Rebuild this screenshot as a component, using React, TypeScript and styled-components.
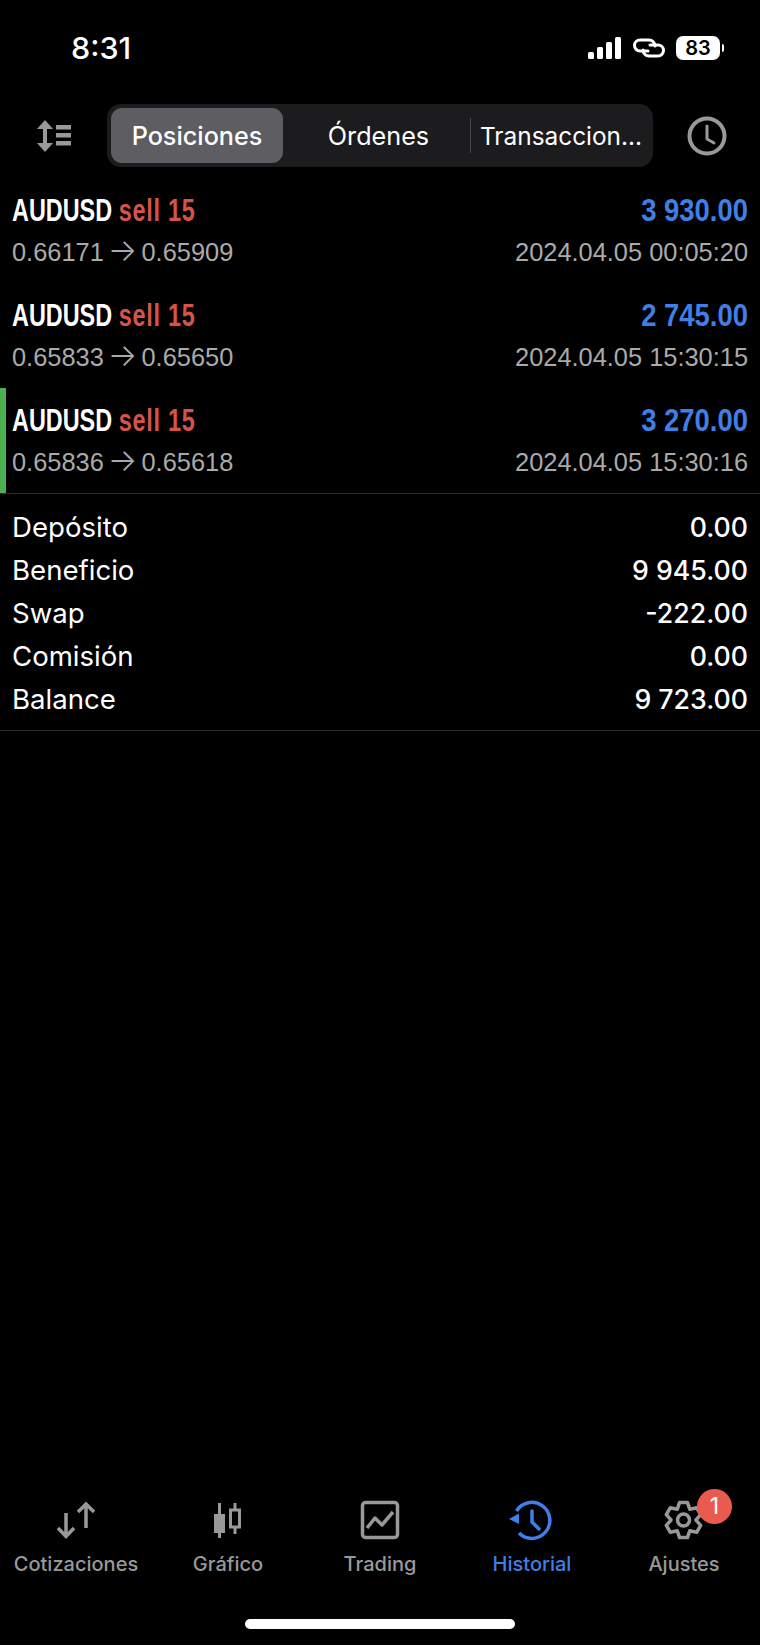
import React from 'react';
import styled, { createGlobalStyle } from 'styled-components';

const GlobalStyle = createGlobalStyle`
  html, body {
    margin: 0;
    padding: 0;
    background: #000;
  }
`;

const Page = styled.div`
  width: 760px;
  height: 1645px;
  display: flex;
  flex-direction: column;
  background: #000;
  color: #fff;
  font-family: Inter, "Liberation Sans", sans-serif;
  overflow: hidden;
`;

const StatusBar = styled.div`
  height: 104px;
  box-sizing: border-box;
  padding: 36px 36px 0 71px;
  display: flex;
  align-items: flex-start;
  justify-content: space-between;
`;

const Clock = styled.div`
  font-size: 30.5px;
  line-height: 24px;
  font-weight: 500;
`;

const StatusIcons = styled.div`
  display: flex;
  align-items: center;
  height: 24px;
`;

const Battery = styled.div`
  width: 44px;
  height: 24px;
  margin-left: 10px;
  border-radius: 7px;
  background: #fff;
  color: #000;
  font-size: 20px;
  font-weight: 600;
  line-height: 24px;
  text-align: center;
`;

const BatteryTip = styled.div`
  width: 2px;
  height: 8px;
  margin-left: 2px;
  border-radius: 0 2px 2px 0;
  background: #fff;
`;

const Toolbar = styled.div`
  height: 63px;
  padding-left: 36px;
  display: flex;
  align-items: center;
`;

const Segments = styled.div`
  width: 546px;
  height: 63px;
  margin: 0 34px 0 36px;
  box-sizing: border-box;
  padding: 4px 0 4px 4px;
  display: flex;
  align-items: center;
  border-radius: 14px;
  background: #1c1c1e;
`;

const Segment = styled.div<{ $active?: boolean; $width: number; $shift?: number }>`
  width: ${(p) => p.$width}px;
  box-sizing: border-box;
  padding-left: ${(p) => p.$shift ?? 0}px;
  height: 55px;
  display: flex;
  align-items: center;
  justify-content: center;
  border-radius: 11px;
  background: ${(p) => (p.$active ? '#5d5d62' : 'transparent')};
  font-size: 25.2px;
  font-weight: ${(p) => (p.$active ? 500 : 400)};
  white-space: nowrap;
`;

const LastSegment = styled.div`
  flex: 1;
  padding-left: 9px;
  font-size: 24.4px;
  white-space: nowrap;
`;

const SegmentDivider = styled.div`
  width: 1px;
  height: 35px;
  background: #48484a;
`;

const Main = styled.main`
  flex: 1;
  margin-top: 11px;
`;

const Trade = styled.div<{ $marked?: boolean }>`
  height: 105px;
  box-sizing: border-box;
  padding: 14px 12px 0;
  display: grid;
  grid-template-columns: 1fr auto;
  grid-template-rows: 38px 36px;
  row-gap: 4px;
  align-items: center;
  box-shadow: ${(p) => (p.$marked ? 'inset 6px 0 0 #4caf50' : 'none')};
`;

/* no condensed face installed, so the bold sans is squeezed sideways */
const TradeTitle = styled.div`
  font-family: "Liberation Sans", sans-serif;
  font-size: 31px;
  font-weight: 700;
  line-height: 38px;
  white-space: nowrap;
  transform: scaleX(0.755);
  transform-origin: left center;
`;

const Side = styled.span`
  color: #d5544a;
  letter-spacing: 1px;
`;

const Profit = styled(TradeTitle)`
  color: #3f7fe6;
  text-align: right;
  transform: scaleX(0.885);
  transform-origin: right center;
`;

const TradeDetail = styled.div`
  font-family: "Liberation Sans", sans-serif;
  font-size: 25.4px;
  color: #aaa;
  line-height: 36px;
  white-space: nowrap;
`;

const Arrow = styled.span`
  margin: 0 -3px;
  font-family: Inter, sans-serif;
  font-size: 31px;
  font-weight: 300;
  line-height: 0;
`;

const TradeTime = styled(TradeDetail)`
  text-align: right;
`;

const Summary = styled.section`
  border-top: 1px solid #2c2c2e;
  border-bottom: 1px solid #2c2c2e;
  padding: 11px 12px 10px;
`;

const SummaryRow = styled.div`
  height: 43px;
  display: flex;
  align-items: center;
  justify-content: space-between;
  font-size: 27.6px;
`;

const SummaryValue = styled.span`
  font-size: 26.7px;
  font-weight: 500;
`;

const TabBar = styled.nav`
  display: grid;
  grid-template-columns: repeat(5, 152px);
`;

const Tab = styled.div<{ $active?: boolean }>`
  display: flex;
  flex-direction: column;
  align-items: center;
  gap: 12px;
  color: ${(p) => (p.$active ? '#3f7fe6' : '#999')};
`;

const TabIcon = styled.div`
  position: relative;
  width: 40px;
  height: 40px;
`;

const TabLabel = styled.div`
  font-size: 20px;
  font-weight: 500;
  line-height: 24px;
  white-space: nowrap;
`;

const Badge = styled.div`
  position: absolute;
  left: 33px;
  top: -11px;
  width: 35px;
  height: 35px;
  border-radius: 50%;
  background: #ea5a4f;
  color: #fff;
  font-size: 23px;
  line-height: 35px;
  text-align: center;
`;

const HomeBar = styled.div`
  width: 270px;
  height: 10px;
  margin: 43px auto 16px;
  border-radius: 5px;
  background: #fff;
`;

const Glyph = styled.svg`
  display: block;
  overflow: visible;
  fill: none;
  stroke: currentColor;
  stroke-width: 3.5;
`;

const ToolIcon = styled(Glyph)`
  color: #999;
  flex: none;
`;

const trades = [
  { open: '0.66171', close: '0.65909', time: '2024.04.05 00:05:20', profit: '3 930.00' },
  { open: '0.65833', close: '0.65650', time: '2024.04.05 15:30:15', profit: '2 745.00' },
  { open: '0.65836', close: '0.65618', time: '2024.04.05 15:30:16', profit: '3 270.00', marked: true },
];

const summary = [
  ['Depósito', '0.00'],
  ['Beneficio', '9 945.00'],
  ['Swap', '-222.00'],
  ['Comisión', '0.00'],
  ['Balance', '9 723.00'],
];

// six tooth gear outline, built once
function gearPath(cx: number, cy: number) {
  const pts: string[] = [];
  for (let i = 0; i < 6; i++) {
    const a = (i * Math.PI) / 3 - Math.PI / 2;
    [
      [-0.52, 12.5],
      [-0.22, 18],
      [0.22, 18],
      [0.52, 12.5],
    ].forEach(([o, r]) => {
      pts.push(`${(cx + r * Math.cos(a + o)).toFixed(2)} ${(cy + r * Math.sin(a + o)).toFixed(2)}`);
    });
  }
  return 'M' + pts.join('L') + 'Z';
}

const Signal = () => (
  <svg width="33" height="24" viewBox="0 0 33 24" fill="#fff">
    <rect x="0" y="16" width="6" height="7" rx="1.5" />
    <rect x="9" y="11" width="6" height="12" rx="1.5" />
    <rect x="18" y="6" width="6" height="17" rx="1.5" />
    <rect x="27" y="1" width="6" height="22" rx="1.5" />
  </svg>
);

const LinkIcon = () => (
  <Glyph width="34" height="20" viewBox="0 0 34 20" style={{ marginLeft: 11, strokeWidth: 3, strokeLinecap: 'round' }}>
    <path d="M16 13H8A5.5 5.5 0 0 1 8 2H17A6 6 0 0 1 23 8" />
    <path d="M18 7H26A5.5 5.5 0 0 1 26 18H17A6 6 0 0 1 11 12" />
  </Glyph>
);

const SortIcon = () => (
  <ToolIcon width="35" height="32" viewBox="0 0 35 32" style={{ strokeWidth: 0 }}>
    <path fill="currentColor" d="M9 0L17 9H11V23H17L9 32L1 23H7V9H1Z" />
    <rect fill="currentColor" x="20" y="5" width="15" height="4.5" />
    <rect fill="currentColor" x="20" y="13" width="15" height="4.5" />
    <rect fill="currentColor" x="20" y="21" width="15" height="4.5" />
  </ToolIcon>
);

const HistoryClock = () => (
  <ToolIcon width="40" height="40" viewBox="0 0 40 40" style={{ strokeWidth: 4 }}>
    <circle cx="20" cy="20" r="17.5" />
    <path d="M20 10V23L27 27" strokeWidth="3" strokeLinecap="round" strokeLinejoin="round" />
  </ToolIcon>
);

const QuotesIcon = () => (
  <Glyph width="40" height="40" viewBox="0 0 40 40">
    <path d="M10 13V36M2 28L10 36.5L18 28" />
    <path d="M30 4V28M22 12L30 4L38 12" />
  </Glyph>
);

const ChartIcon = () => (
  <Glyph width="40" height="40" viewBox="0 0 40 40" style={{ strokeWidth: 3 }}>
    <path d="M11.5 3V38" />
    <rect x="6" y="14" width="11" height="19" fill="currentColor" stroke="none" />
    <path d="M27 3V10M27 27V34" />
    <rect x="22.5" y="10" width="9" height="17" />
  </Glyph>
);

const TradingIcon = () => (
  <Glyph width="40" height="40" viewBox="0 0 40 40">
    <rect x="2.5" y="2.5" width="35" height="35" rx="3" />
    <path d="M7 28L15 18L22 25L33 12" strokeLinejoin="round" />
  </Glyph>
);

const HistoryIcon = () => (
  <Glyph width="40" height="40" viewBox="0 0 40 40">
    <path d="M4.5 11A18 18 0 1 1 7 33" />
    <path d="M-3 19L7 13.5V24Z" fill="currentColor" stroke="none" />
    <path d="M20 11V22L27 29" strokeLinecap="round" />
  </Glyph>
);

const SettingsIcon = () => (
  <Glyph width="40" height="40" viewBox="0 0 40 40">
    <path d={gearPath(19.5, 20)} strokeLinejoin="round" />
    <circle cx="19.5" cy="20" r="6" />
  </Glyph>
);

export default function App() {
  return (
    <Page>
      <GlobalStyle />
      <StatusBar>
        <Clock>8:31</Clock>
        <StatusIcons>
          <Signal />
          <LinkIcon />
          <Battery>83</Battery>
          <BatteryTip />
        </StatusIcons>
      </StatusBar>

      <Toolbar>
        <SortIcon />
        <Segments>
          <Segment $active $width={172}>Posiciones</Segment>
          <Segment $width={187} $shift={4}>Órdenes</Segment>
          <SegmentDivider />
          <LastSegment>Transaccion...</LastSegment>
        </Segments>
        <HistoryClock />
      </Toolbar>

      <Main>
        {trades.map((t) => (
          <Trade key={t.time} $marked={t.marked}>
            <TradeTitle>
              AUDUSD <Side>sell 15</Side>
            </TradeTitle>
            <Profit>{t.profit}</Profit>
            <TradeDetail>
              {t.open} <Arrow>→</Arrow> {t.close}
            </TradeDetail>
            <TradeTime>{t.time}</TradeTime>
          </Trade>
        ))}
        <Summary>
          {summary.map(([label, value]) => (
            <SummaryRow key={label}>
              <span>{label}</span>
              <SummaryValue>{value}</SummaryValue>
            </SummaryRow>
          ))}
        </Summary>
      </Main>

      <TabBar>
        <Tab>
          <TabIcon><QuotesIcon /></TabIcon>
          <TabLabel>Cotizaciones</TabLabel>
        </Tab>
        <Tab>
          <TabIcon><ChartIcon /></TabIcon>
          <TabLabel>Gráfico</TabLabel>
        </Tab>
        <Tab>
          <TabIcon><TradingIcon /></TabIcon>
          <TabLabel>Trading</TabLabel>
        </Tab>
        <Tab $active>
          <TabIcon><HistoryIcon /></TabIcon>
          <TabLabel>Historial</TabLabel>
        </Tab>
        <Tab>
          <TabIcon>
            <SettingsIcon />
            <Badge>1</Badge>
          </TabIcon>
          <TabLabel>Ajustes</TabLabel>
        </Tab>
      </TabBar>
      <HomeBar />
    </Page>
  );
}
